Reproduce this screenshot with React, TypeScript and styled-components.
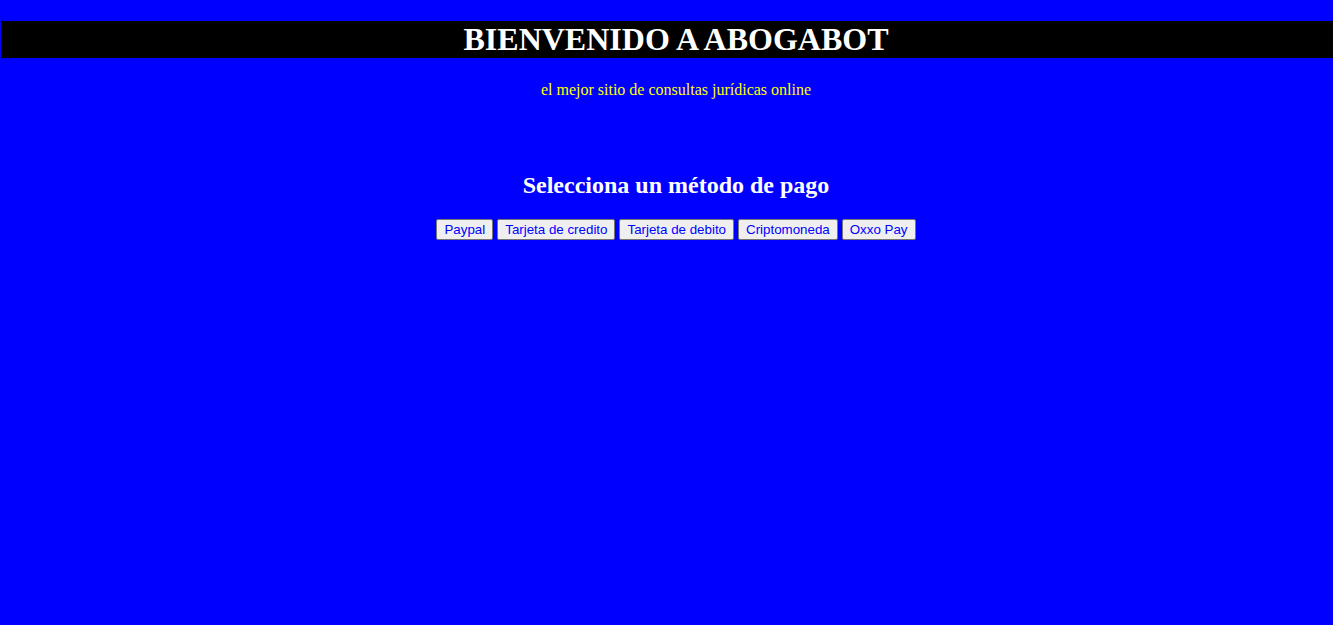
import React from "react";
import styled, { createGlobalStyle } from "styled-components";

const Global = createGlobalStyle`
  html, body {
    margin: 0;
    padding: 0;
    background: #0000ff;
    font-family: "Liberation Serif", "Times New Roman", serif;
  }
`;

const Page = styled.div`
  display: flex;
  flex-direction: column;
  padding-top: 21px;
`;

const TitleBar = styled.h1`
  margin: 0 0 0 1px;
  padding-left: 18px;
  background: #000000;
  color: #ffffff;
  font-size: 32px;
  font-weight: bold;
  line-height: 37px;
  text-align: center;
`;

const Content = styled.div`
  padding-left: 19px;
  display: flex;
  flex-direction: column;
  align-items: center;
`;

const Tagline = styled.p`
  margin: 22px 0 0;
  color: #ffff00;
  font-size: 16px;
  line-height: 19px;
`;

const Heading = styled.h2`
  margin: 72px 0 0;
  color: #ffffff;
  font-size: 24px;
  font-weight: bold;
  line-height: 28px;
`;

const ButtonRow = styled.div`
  margin-top: 20px;
  display: flex;
  gap: 4px;
`;

const PayButton = styled.button`
  font-family: "Liberation Sans", Arial, sans-serif;
  font-size: 13.333px;
  line-height: 15px;
  padding: 2px 7px;
  border: 1px solid #767676;
  border-radius: 2px;
  background: #efefef;
  color: #0000ff;
  cursor: pointer;
`;

const methods = ["Paypal", "Tarjeta de credito", "Tarjeta de debito", "Criptomoneda", "Oxxo Pay"];

export default function App() {
  return (
    <>
      <Global />
      <Page>
        <TitleBar>BIENVENIDO A ABOGABOT</TitleBar>
        <Content>
          <Tagline>el mejor sitio de consultas jurídicas online</Tagline>
          <Heading>Selecciona un método de pago</Heading>
          <ButtonRow>
            {methods.map((m) => (
              <PayButton key={m}>{m}</PayButton>
            ))}
          </ButtonRow>
        </Content>
      </Page>
    </>
  );
}
